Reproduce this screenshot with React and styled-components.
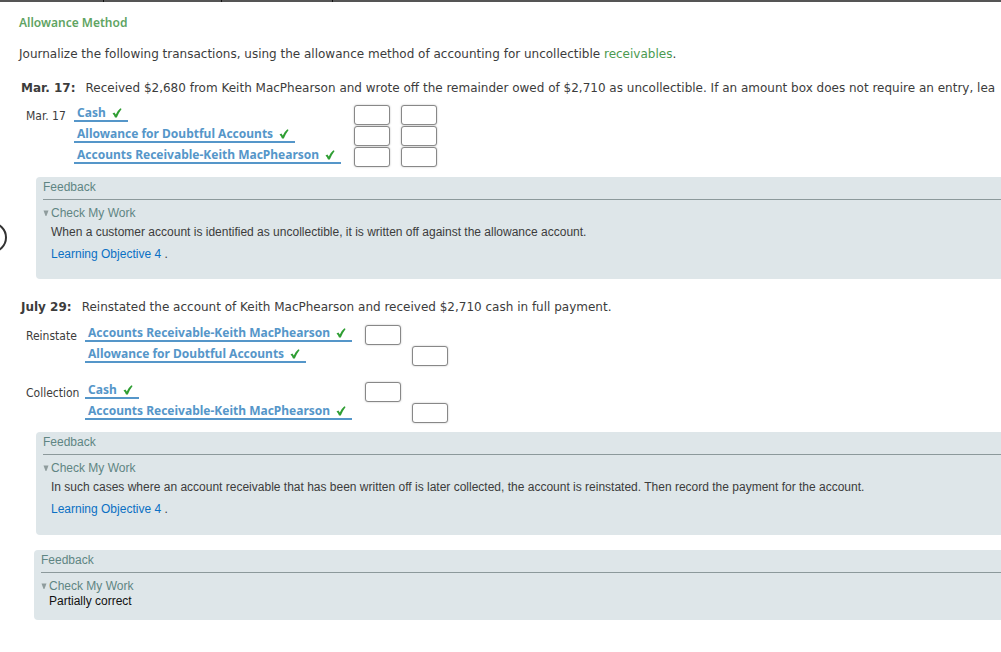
import React from "react";
import styled, { createGlobalStyle } from "styled-components";

const GlobalStyle = createGlobalStyle`
  * { box-sizing: border-box; }
  body {
    margin: 0;
    background: #fff;
    color: #3c3c3c;
    font: 12px/16px "DejaVu Sans", Verdana, sans-serif;
    overflow-x: hidden;
  }
`;

const Page = styled.div`
  position: relative;
  overflow: hidden;
  padding-bottom: 32px;
`;

const TopBar = styled.div`
  display: flex;
  height: 2px;
  background: #555;
`;

const TopTab = styled.div`
  width: ${(p) => p.$width}px;
  border-right: 1px solid #111;
`;

const PreviousButton = styled.button`
  position: absolute;
  left: -24px;
  top: 222px;
  width: 31px;
  height: 31px;
  border: 2px solid #333;
  border-radius: 50%;
  background: #fff;
  padding: 0;
`;

const Heading = styled.h1`
  margin: 13px 0 0 19px;
  font: 600 12px/16px "Noto Sans", Tahoma, sans-serif;
  color: #5fa463;
`;

const Intro = styled.p`
  margin: 15px 0 0 19px;
  white-space: nowrap;
`;

const Term = styled.a`
  color: #4b9a50;
  text-decoration: none;
`;

const Transaction = styled.p`
  margin: ${(p) => p.$top}px 0 0 21px;
  white-space: nowrap;
`;

const When = styled.strong`
  margin-right: 10px;
`;

const Journal = styled.table`
  margin: ${(p) => p.$top}px 0 0 26px;
  border-collapse: collapse;
  table-layout: fixed;
  width: ${(p) => p.$label + 374}px;
`;

const LabelCell = styled.th`
  width: ${(p) => p.$width}px;
  height: 21px;
  padding: 0;
  text-align: left;
  font: 12px/20px "DejaVu Sans Condensed", Tahoma, sans-serif;
`;

const AccountCell = styled.td`
  width: 280px;
  padding: 0;
  vertical-align: top;
`;

const AmountCell = styled.td`
  width: 47px;
  padding: 0;
  vertical-align: top;
`;

const SpacerCell = styled.td`
  height: 15px;
  padding: 0;
`;

const Account = styled.button`
  display: flex;
  align-items: center;
  gap: 6px;
  height: 17px;
  padding: 0 6px 0 3px;
  border: 0;
  border-bottom: 2px solid #5596c9;
  background: none;
  color: #5596c9;
  font: bold 12px/15px "Noto Sans", Tahoma, sans-serif;
  white-space: nowrap;
`;

const Amount = styled.input`
  display: block;
  width: 36px;
  height: 20px;
  padding: 0 3px;
  border: 1px solid #888;
  border-radius: 3px;
  box-shadow: 0 0 2px #bbb;
  background: #fff;
  font: inherit;
`;

const FeedbackBox = styled.section`
  margin: ${(p) => p.$top}px 0 0 ${(p) => p.$left}px;
  padding: 3px 0 ${(p) => p.$bottom}px 7px;
  border-radius: 4px 0 0 4px;
  background: #dee6e9;
  font: 12px/14px "Liberation Sans", Arial, sans-serif;
`;

const FeedbackTitle = styled.h2`
  margin: 0;
  padding-bottom: 5px;
  border-bottom: 1px solid #8c999b;
  color: #5f8583;
  font: inherit;
`;

const Summary = styled.summary`
  display: flex;
  align-items: center;
  gap: 2px;
  margin-top: 6px;
  color: #5f8583;
  list-style: none;
`;

const FeedbackText = styled.p`
  margin: ${(p) => p.$top}px 0 0 8px;
  color: ${(p) => p.$color};
`;

const ObjectiveLink = styled.a`
  color: #0a70c4;
  text-decoration: none;
`;

function Check() {
  return (
    <svg width="10" height="10" viewBox="0 0 10 10" aria-hidden="true">
      <path d="M.5 5.6 2.4 4.4 3.8 6.4 Q5.6 2.6 8.4 .3 L9.6 .9 Q6.9 4.3 4.8 9.6 L3 9.6 Q2.2 7.3 .5 5.6Z" fill="#2f9e33" />
    </svg>
  );
}

function Triangle() {
  return (
    <svg width="6" height="6" viewBox="0 0 6 6" aria-hidden="true">
      <path d="M.5 .5h5L3.4 6h-.8z" fill="#8f9c9d" />
    </svg>
  );
}

function Entries({ rows, label, top }) {
  return (
    <Journal $label={label} $top={top}>
      <tbody>
        {rows.map((row, i) =>
          row ? (
            <tr key={i}>
              <LabelCell scope="row" $width={label}>{row.label}</LabelCell>
              <AccountCell>
                <Account type="button">{row.account}<Check /></Account>
              </AccountCell>
              <AmountCell>
                {row.debit && <Amount type="text" aria-label={`${row.account} debit`} />}
              </AmountCell>
              <AmountCell>
                {row.credit && <Amount type="text" aria-label={`${row.account} credit`} />}
              </AmountCell>
            </tr>
          ) : (
            <tr key={i}><SpacerCell colSpan={4} /></tr>
          )
        )}
      </tbody>
    </Journal>
  );
}

function Feedback({ top, left = 36, bottom = 18, textTop = 5, color = "#3c3c3c", text, objective }) {
  return (
    <FeedbackBox $top={top} $left={left} $bottom={bottom}>
      <FeedbackTitle>Feedback</FeedbackTitle>
      <details open>
        <Summary><Triangle />Check My Work</Summary>
        <FeedbackText $top={textTop} $color={color}>{text}</FeedbackText>
        {objective && (
          <FeedbackText $top={8} $color={color}>
            <ObjectiveLink href="#objective">{objective}</ObjectiveLink> .
          </FeedbackText>
        )}
      </details>
    </FeedbackBox>
  );
}

const RECEIVABLE = "Accounts Receivable-Keith MacPhearson";
const ALLOWANCE = "Allowance for Doubtful Accounts";

const marchRows = [
  { label: "Mar. 17", account: "Cash", debit: true, credit: true },
  { account: ALLOWANCE, debit: true, credit: true },
  { account: RECEIVABLE, debit: true, credit: true },
];

const julyRows = [
  { label: "Reinstate", account: RECEIVABLE, debit: true },
  { account: ALLOWANCE, credit: true },
  null,
  { label: "Collection", account: "Cash", debit: true },
  { account: RECEIVABLE, credit: true },
];

export default function App() {
  return (
    <Page>
      <GlobalStyle />
      <TopBar>
        <TopTab $width={104} />
        <TopTab $width={118} />
        <TopTab $width={111} />
      </TopBar>
      <PreviousButton type="button" aria-label="Previous" />
      <main>
        <Heading>Allowance Method</Heading>
        <Intro>
          Journalize the following transactions, using the allowance method of accounting for uncollectible{" "}
          <Term href="#receivables">receivables</Term>.
        </Intro>
        <Transaction $top={18}>
          <When>Mar. 17:</When>
          Received $2,680 from Keith MacPhearson and wrote off the remainder owed of $2,710 as uncollectible. If an
          amount box does not require an entry, lea
        </Transaction>
        <Entries rows={marchRows} label={48} top={9} />
        <Feedback
          top={9}
          text="When a customer account is identified as uncollectible, it is written off against the allowance account."
          objective="Learning Objective 4"
        />
        <Transaction $top={20}>
          <When>July 29:</When>
          Reinstated the account of Keith MacPhearson and received $2,710 cash in full payment.
        </Transaction>
        <Entries rows={julyRows} label={59} top={10} />
        <Feedback
          top={8}
          bottom={19}
          text="In such cases where an account receivable that has been written off is later collected, the account is reinstated. Then record the payment for the account."
          objective="Learning Objective 4"
        />
        <Feedback top={15} left={34} bottom={12} textTop={1} color="#111" text="Partially correct" />
      </main>
    </Page>
  );
}
